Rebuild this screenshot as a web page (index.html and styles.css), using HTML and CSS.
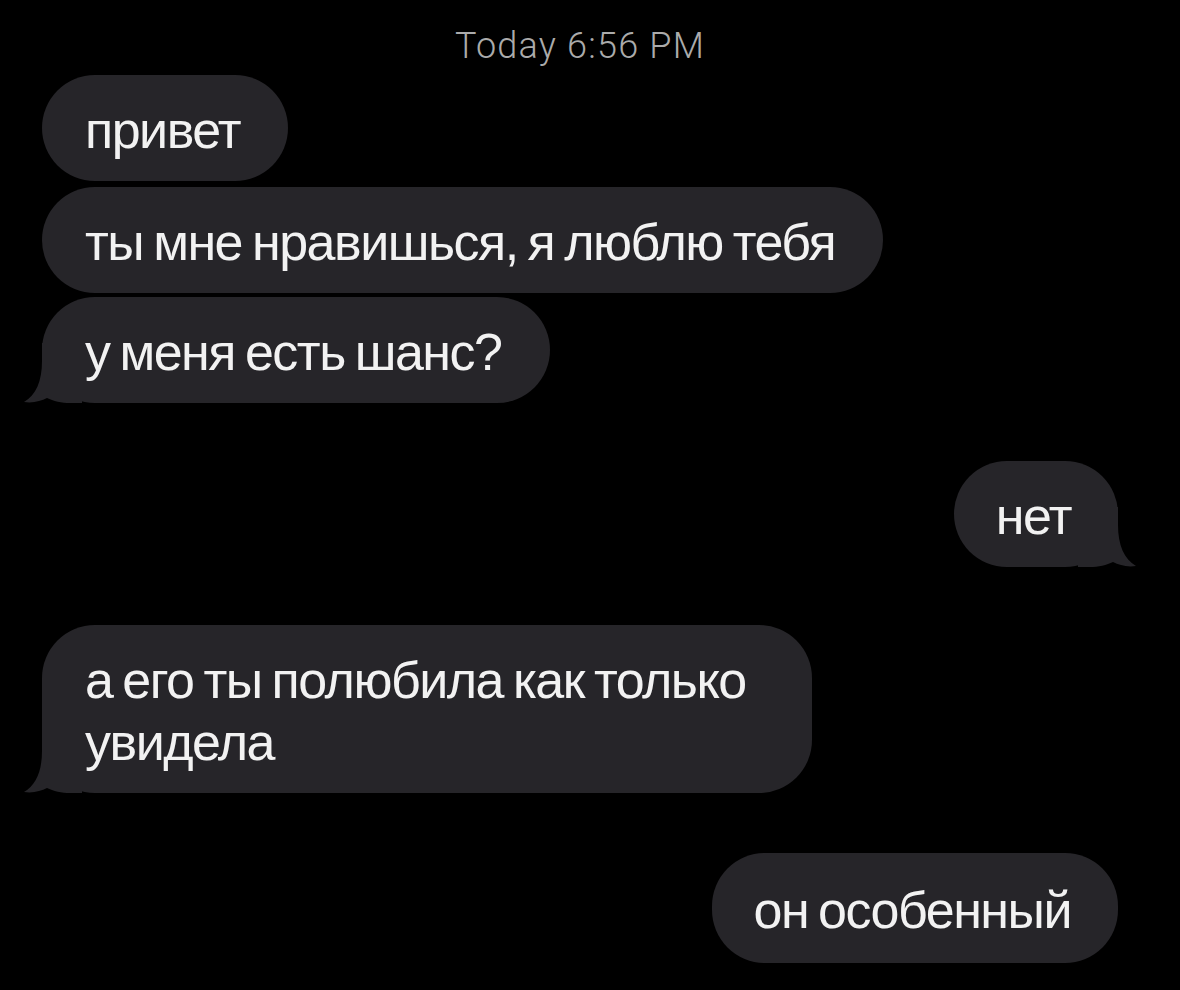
FILE: index.html
```html
<!DOCTYPE html>
<html lang="ru">
<head>
    <meta charset="UTF-8">
    <meta name="viewport" content="width=device-width, initial-scale=1.0">
    <title>Сообщения</title>
    <link rel="stylesheet" href="styles.css">
</head>
<body>
    <main class="chat">
        <p class="stamp">Today 6:56 PM</p>

        <div class="msg in">привет</div>
        <div class="msg in gap-sm">ты мне нравишься, я люблю тебя</div>
        <div class="msg in gap-xs">
            у меня есть шанс?
            <svg class="tail" viewBox="0 0 60 60"><path d="M0 0H40V18C40 38 46 52 58 59C49 60.5 41 58 35 55C29 58 20 60 12 60H0Z"/></svg>
        </div>

        <div class="msg out gap-lg">
            нет
            <svg class="tail" viewBox="0 0 60 60"><path d="M0 0H40V18C40 38 46 52 58 59C49 60.5 41 58 35 55C29 58 20 60 12 60H0Z"/></svg>
        </div>

        <div class="msg in gap-lg wide">
            а его ты полюбила как только<br>увидела
            <svg class="tail" viewBox="0 0 60 60"><path d="M0 0H40V18C40 38 46 52 58 59C49 60.5 41 58 35 55C29 58 20 60 12 60H0Z"/></svg>
        </div>

        <div class="msg out gap-lg last">он особенный</div>
    </main>
</body>
</html>
```

FILE: styles.css
```css
body {
    margin: 0;
    background: #000;
    font-family: "Liberation Sans", Arial, sans-serif;
}
.chat {
    display: flex;
    flex-direction: column;
    align-items: flex-start;
    padding: 26px 62px 0 42px;
}
.stamp {
    align-self: center;
    margin: 0 0 9px;
    font-family: Roboto, "Liberation Sans", sans-serif;
    font-weight: 300;
    font-size: 36px;
    line-height: 40px;
    letter-spacing: 1.2px;
    color: #ababab;
}
.msg {
    position: relative;
    background: #262529;
    color: #f2f2f2;
    font-size: 52px;
    line-height: 62px;
    letter-spacing: -1.5px;
    word-spacing: -3px;
    padding: 24px 48px 20px 43px;
    border-radius: 53px;
}
.msg.out {
    align-self: flex-end;
    padding-left: 42px;
    padding-right: 47px;
}
.msg.wide {
    padding-right: 66px;
}
.msg.last {
    margin-top: 60px;
    padding-top: 26px;
    padding-bottom: 22px;
}
.gap-xs {
    margin-top: 4px;
}
.gap-sm {
    margin-top: 6px;
}
.gap-lg {
    margin-top: 58px;
}
.tail {
    position: absolute;
    bottom: 0;
    width: 60px;
    height: 60px;
    fill: #262529;
}
.in .tail {
    left: -20px;
    transform: scaleX(-1);
}
.out .tail {
    right: -20px;
}
```
